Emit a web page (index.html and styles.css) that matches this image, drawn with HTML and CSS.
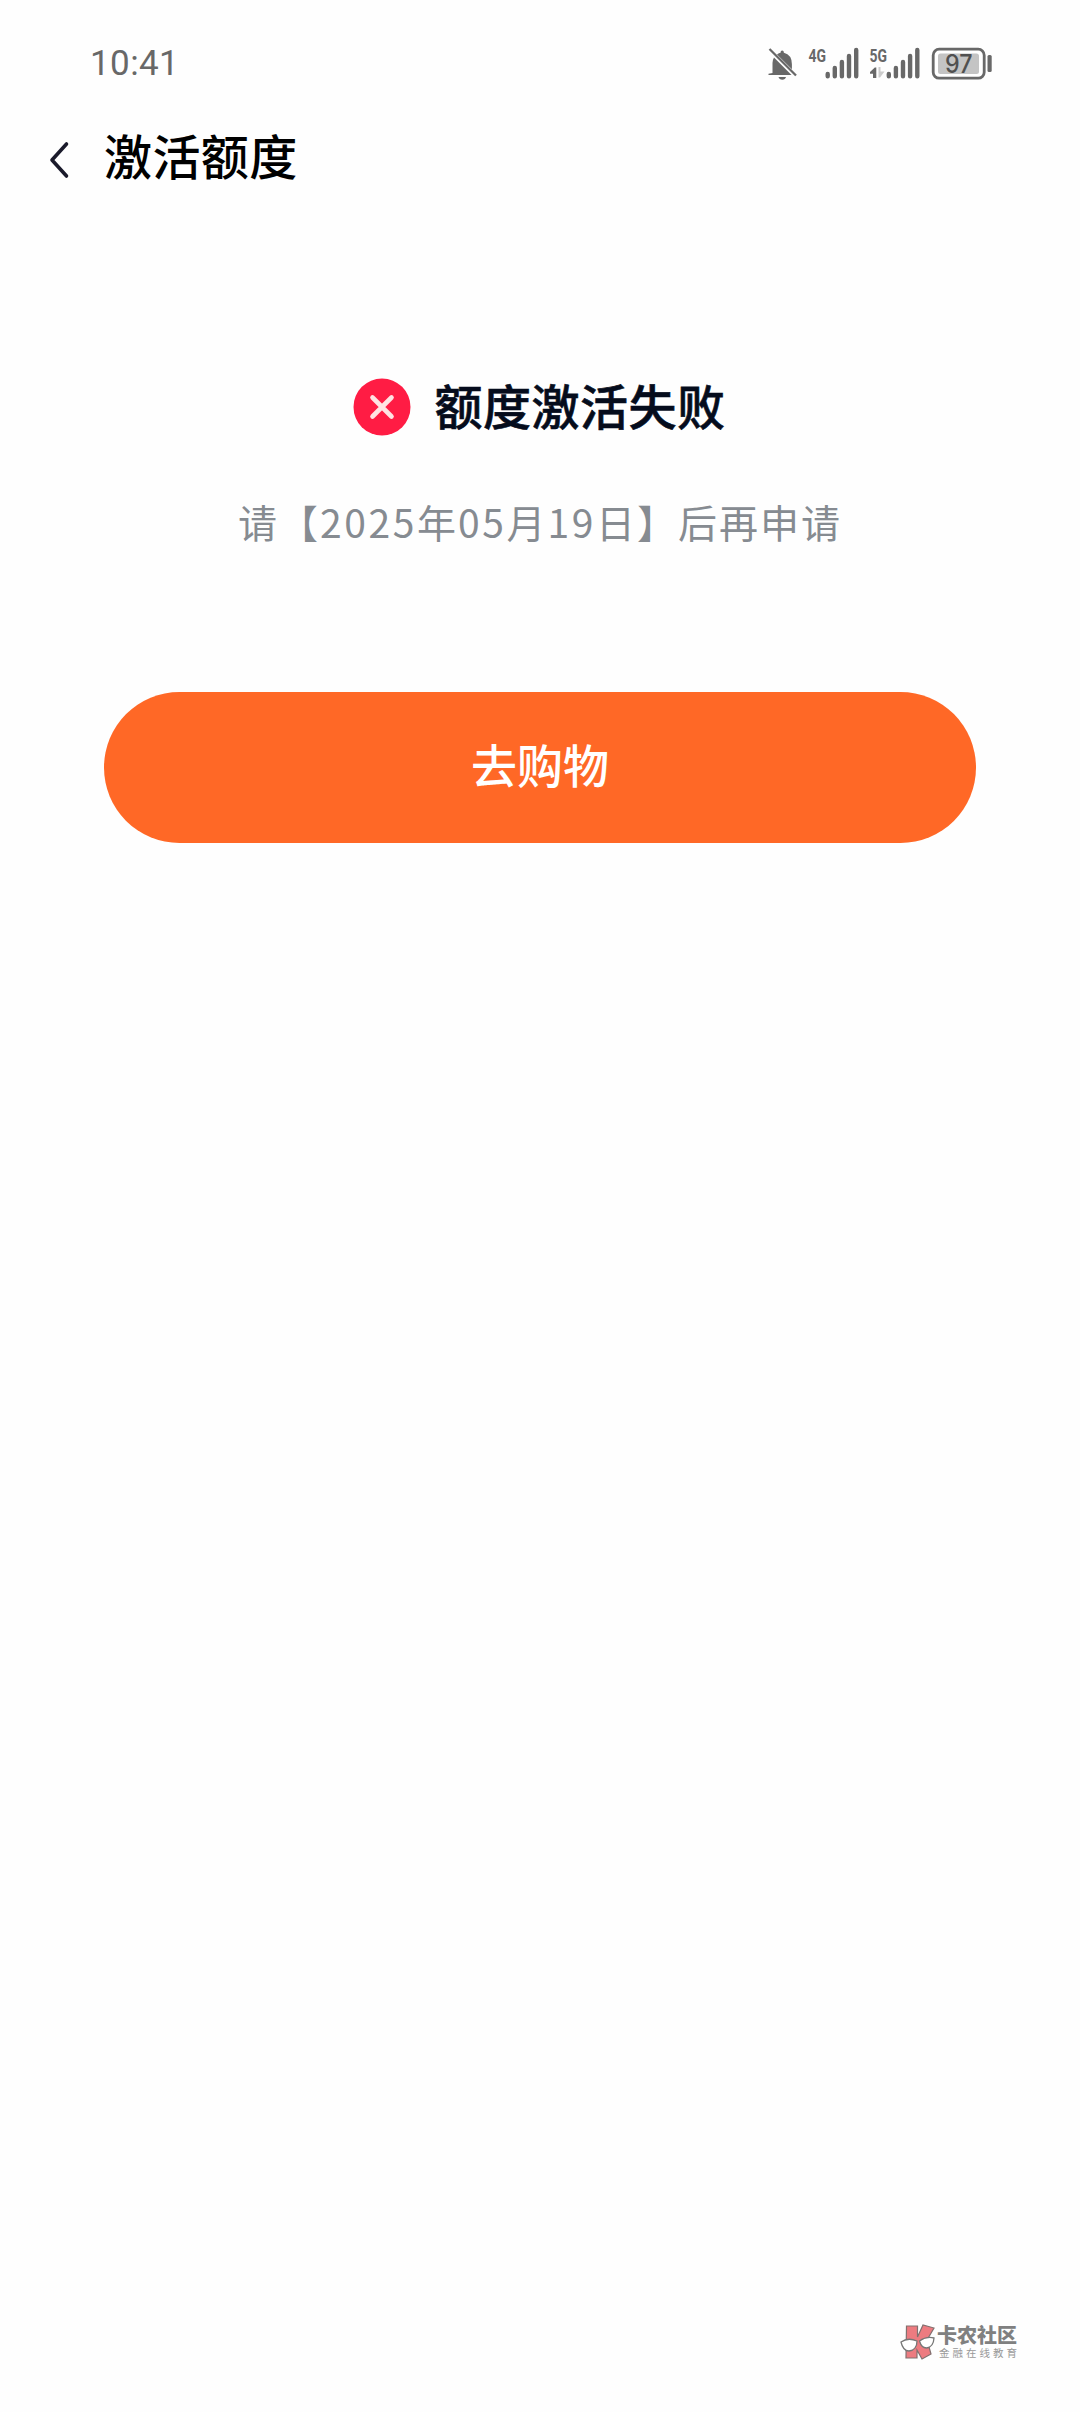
FILE: index.html
```html
<!DOCTYPE html>
<html lang="zh-CN">
<head>
<meta charset="utf-8">
<title>激活额度</title>
<link rel="stylesheet" href="styles.css">
</head>
<body>
<div class="screen">
  <div class="status">
    <span class="clock">10:41</span>
    <svg class="indicators" width="228" height="40" viewBox="764 43 228 40" aria-hidden="true">
      <g fill="#686868">
        <path d="M772.500 73V63q0-3 1.500-5.500L791.500 75H768.500V73.800zM777 54.500q2-1.500 3.500-1.800 0-2.200 1.700-2.200t1.700 2.200q8 2 8 11.500v5z"/>
        <path d="M778.500 77h7.500q-.8 2.800-3.700 2.800T778.500 77z"/>
      </g>
      <path d="M769.500 49L796 75.500" stroke="#686868" stroke-width="2.300"/>
      <g class="network">
        <text x="808.500" y="61.500" textLength="17.500" lengthAdjust="spacingAndGlyphs">4G</text>
        <text x="869.500" y="61.500" textLength="17.500" lengthAdjust="spacingAndGlyphs">5G</text>
      </g>
      <g stroke="#686868" stroke-width="4.400" stroke-linecap="round">
        <path d="M827.700 74v2.200M834.800 68v8.200M841.900 62v14.200M849 56v20.200M856.200 50v26.200"/>
        <path d="M888.800 74v2.200M895.900 68v8.200M903 62v14.200M910.100 56v20.200M917.300 50v26.200"/>
      </g>
      <path d="M876.300 78V67.500h-1.500L870 72v1.800h3V78z" fill="#686868"/>
      <path d="M878.500 67h2v4.500h4L880 77.500h-1.500z" fill="#ccc"/>
      <rect x="933.200" y="49.200" width="51" height="29" rx="6" fill="#fff" stroke="#686868" stroke-width="2.800"/>
      <rect x="938" y="53.500" width="41" height="20.500" rx="2.500" fill="#c4c4c4"/>
      <rect x="987.500" y="55" width="4.200" height="17" rx="1.500" fill="#686868"/>
      <text class="charge" x="945" y="72.500" textLength="27.500" lengthAdjust="spacingAndGlyphs">97</text>
    </svg>
  </div>
  <header class="nav">
    <svg class="back" width="22" height="38" viewBox="0 0 22 38" aria-hidden="true"><path d="M17.500 3L3 19l14.500 16" fill="none" stroke="#1a1a2b" stroke-width="3.600" stroke-linecap="round" stroke-linejoin="round"/></svg>
    <h1 class="nav-title">激活额度</h1>
  </header>
  <main class="result">
    <div class="result-head">
      <svg width="58" height="58" viewBox="0 0 58 58" aria-hidden="true"><circle cx="29" cy="29" r="28.500" fill="#ff1c44"/><path d="M19.500 19.500l19 19M38.500 19.500l-19 19" stroke="#ffe3e3" stroke-width="4.600" stroke-linecap="round"/></svg>
      <h2 class="result-title">额度激活失败</h2>
    </div>
    <p class="hint">请【<span class="num">2025</span>年<span class="num">05</span>月<span class="num">19</span>日】后再申请</p>
    <button class="shop">去购物</button>
  </main>
  <footer class="brand">
    <svg width="36" height="38" viewBox="0 0 36 38" aria-hidden="true">
      <g fill="#ed7b80" stroke="#82706f" stroke-width="1.200">
        <path d="M6.500 3H17.500V14L23 2l11 3-7 12 4 14-9 5-5-9V35L6 35z"/>
      </g>
      <path d="M1 19q7-5 16-1 0 9-8 10Q3 28 1 19zM19.500 18q7-5 14.500-3-.5 9-7.500 10-5 0-7-7z" fill="#fff" stroke="#777" stroke-width="1.300"/>
    </svg>
    <div class="brand-text">
      <span class="brand-name">卡农社区</span>
      <span class="brand-sub">金融在线教育</span>
    </div>
  </footer>
</div>
</body>
</html>
```
FILE: styles.css
```css
body {
  margin: 0;
  background: #fefefe;
  font-family: "Noto Sans CJK SC", sans-serif;
}

.screen {
  display: flex;
  flex-direction: column;
  box-sizing: border-box;
  width: 1080px;
  height: 2412px;
}

.status {
  display: flex;
  justify-content: space-between;
  align-items: center;
  height: 40px;
  padding: 43px 88px 0 90px;
}

.clock {
  padding-top: 2px;
  color: #686868;
  font: 400 35px/40px Roboto, sans-serif;
  letter-spacing: 0.400px;
}

.network {
  fill: #686868;
  font: 700 19px Roboto, sans-serif;
}

.charge {
  fill: #505050;
  font: 500 25px Inter, sans-serif;
}

.nav {
  display: flex;
  align-items: center;
  gap: 33px;
  height: 72px;
  padding: 35px 0 0 49px;
}

.back {
  margin-top: 11px;
}

.nav-title {
  margin: 0;
  color: #000;
  font-size: 48px;
  font-weight: 500;
  letter-spacing: 0.400px;
  line-height: 72px;
}

.result {
  display: flex;
  flex-direction: column;
  align-items: center;
  padding: 181px 104px 0;
}

.result-head {
  display: flex;
  align-items: center;
  gap: 23px;
  height: 72px;
  padding-right: 1px;
}

.result-title {
  margin: 0;
  padding-bottom: 6px;
  color: #050c1c;
  font-size: 48px;
  font-weight: 500;
  letter-spacing: 0.500px;
  line-height: 72px;
  -webkit-text-stroke: 0.600px #050c1c;
}

.hint {
  margin: 48px 0 0;
  color: #868b91;
  font-size: 39px;
  letter-spacing: 2px;
  line-height: 60px;
  white-space: nowrap;
}

.num {
  letter-spacing: 2.600px;
}

.shop {
  width: 872px;
  height: 151px;
  margin-top: 141px;
  padding: 0 0 10px;
  border: 0;
  border-radius: 76px;
  background: #ff6826;
  color: #fff;
  font: 500 46px/66px "Noto Sans CJK SC", sans-serif;
}

.brand {
  display: flex;
  align-items: center;
  gap: 1px;
  height: 38px;
  margin-top: auto;
  padding: 0 0 51px 900px;
}

.brand-text {
  display: flex;
  flex-direction: column;
}

.brand-name {
  color: #808080;
  font-size: 20px;
  font-weight: 900;
  line-height: 20px;
}

.brand-sub {
  padding-left: 2px;
  color: #999;
  font-size: 10.500px;
  letter-spacing: 3px;
  line-height: 15px;
}
```
